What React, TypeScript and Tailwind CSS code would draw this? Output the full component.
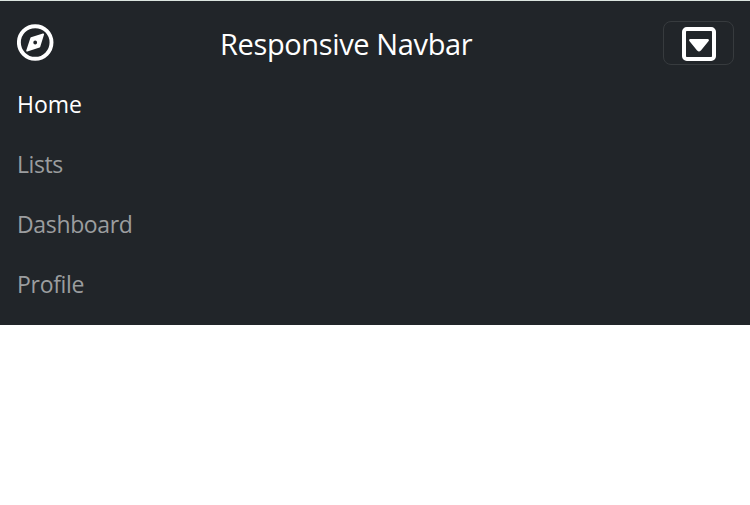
import React from "react";

const links = [
  { label: "Home", style: "text-white tracking-[-0.05px]" },
  { label: "Lists", style: "text-[#9b9d9f] tracking-[-0.4px]" },
  { label: "Dashboard", style: "text-[#9b9d9f] tracking-[-0.35px]" },
  { label: "Profile", style: "text-[#9b9d9f] tracking-[-0.3px]" },
];

function CompassIcon() {
  return (
    <svg width="37" height="37" viewBox="0 0 37 37" fill="none" aria-hidden="true">
      <circle cx="18.2" cy="18.5" r="16.3" stroke="white" strokeWidth="3.9" />
      <path
        fillRule="evenodd"
        fill="white"
        stroke="white"
        strokeWidth="1.8"
        strokeLinejoin="round"
        d="M26.2 10.3 L14.3 14.1 L10.1 26.7 L22.3 22.7 Z M18.2 15.7 A2.8 2.8 0 1 1 18.2 21.3 A2.8 2.8 0 1 1 18.2 15.7 Z"
      />
    </svg>
  );
}

function CaretSquareIcon() {
  return (
    <svg width="34" height="34" viewBox="0 0 34 34" fill="none" aria-hidden="true">
      <rect x="2" y="2" width="30" height="30" rx="2.8" stroke="white" strokeWidth="4" />
      <path d="M8.3 13.3 H25.7 L18 22.7 Q17 23.7 16 22.7 Z" fill="white" stroke="white" strokeWidth="2.4" strokeLinejoin="round" />
    </svg>
  );
}

export default function App() {
  return (
    <div className="min-h-screen bg-white font-['Open_Sans','Noto_Sans',sans-serif]">
      <nav className="h-[325px] border-t border-[#dbe5df] bg-[#212529] px-4">
        <header className="flex h-[73px] items-start pt-5">
          <a href="#" aria-label="Home" className="ml-px mt-[3px] w-[37px] text-white">
            <CompassIcon />
          </a>
          <h1 className="ml-[166px] whitespace-nowrap text-[29px] leading-[46px] tracking-[-0.37px] text-white">Responsive Navbar</h1>
          <button aria-label="Toggle menu" className="ml-auto flex h-[44px] w-[71px] items-start rounded-lg border border-[#373b3e] pl-[18px] pt-[5px] text-white">
            <CaretSquareIcon />
          </button>
        </header>
        <ul>
          {links.map((link) => (
            <li key={link.label} className="flex h-[60px] items-center pl-px">
              <a href="#" className={`whitespace-nowrap text-[23px] leading-9 ${link.style}`}>{link.label}</a>
            </li>
          ))}
        </ul>
      </nav>
    </div>
  );
}
